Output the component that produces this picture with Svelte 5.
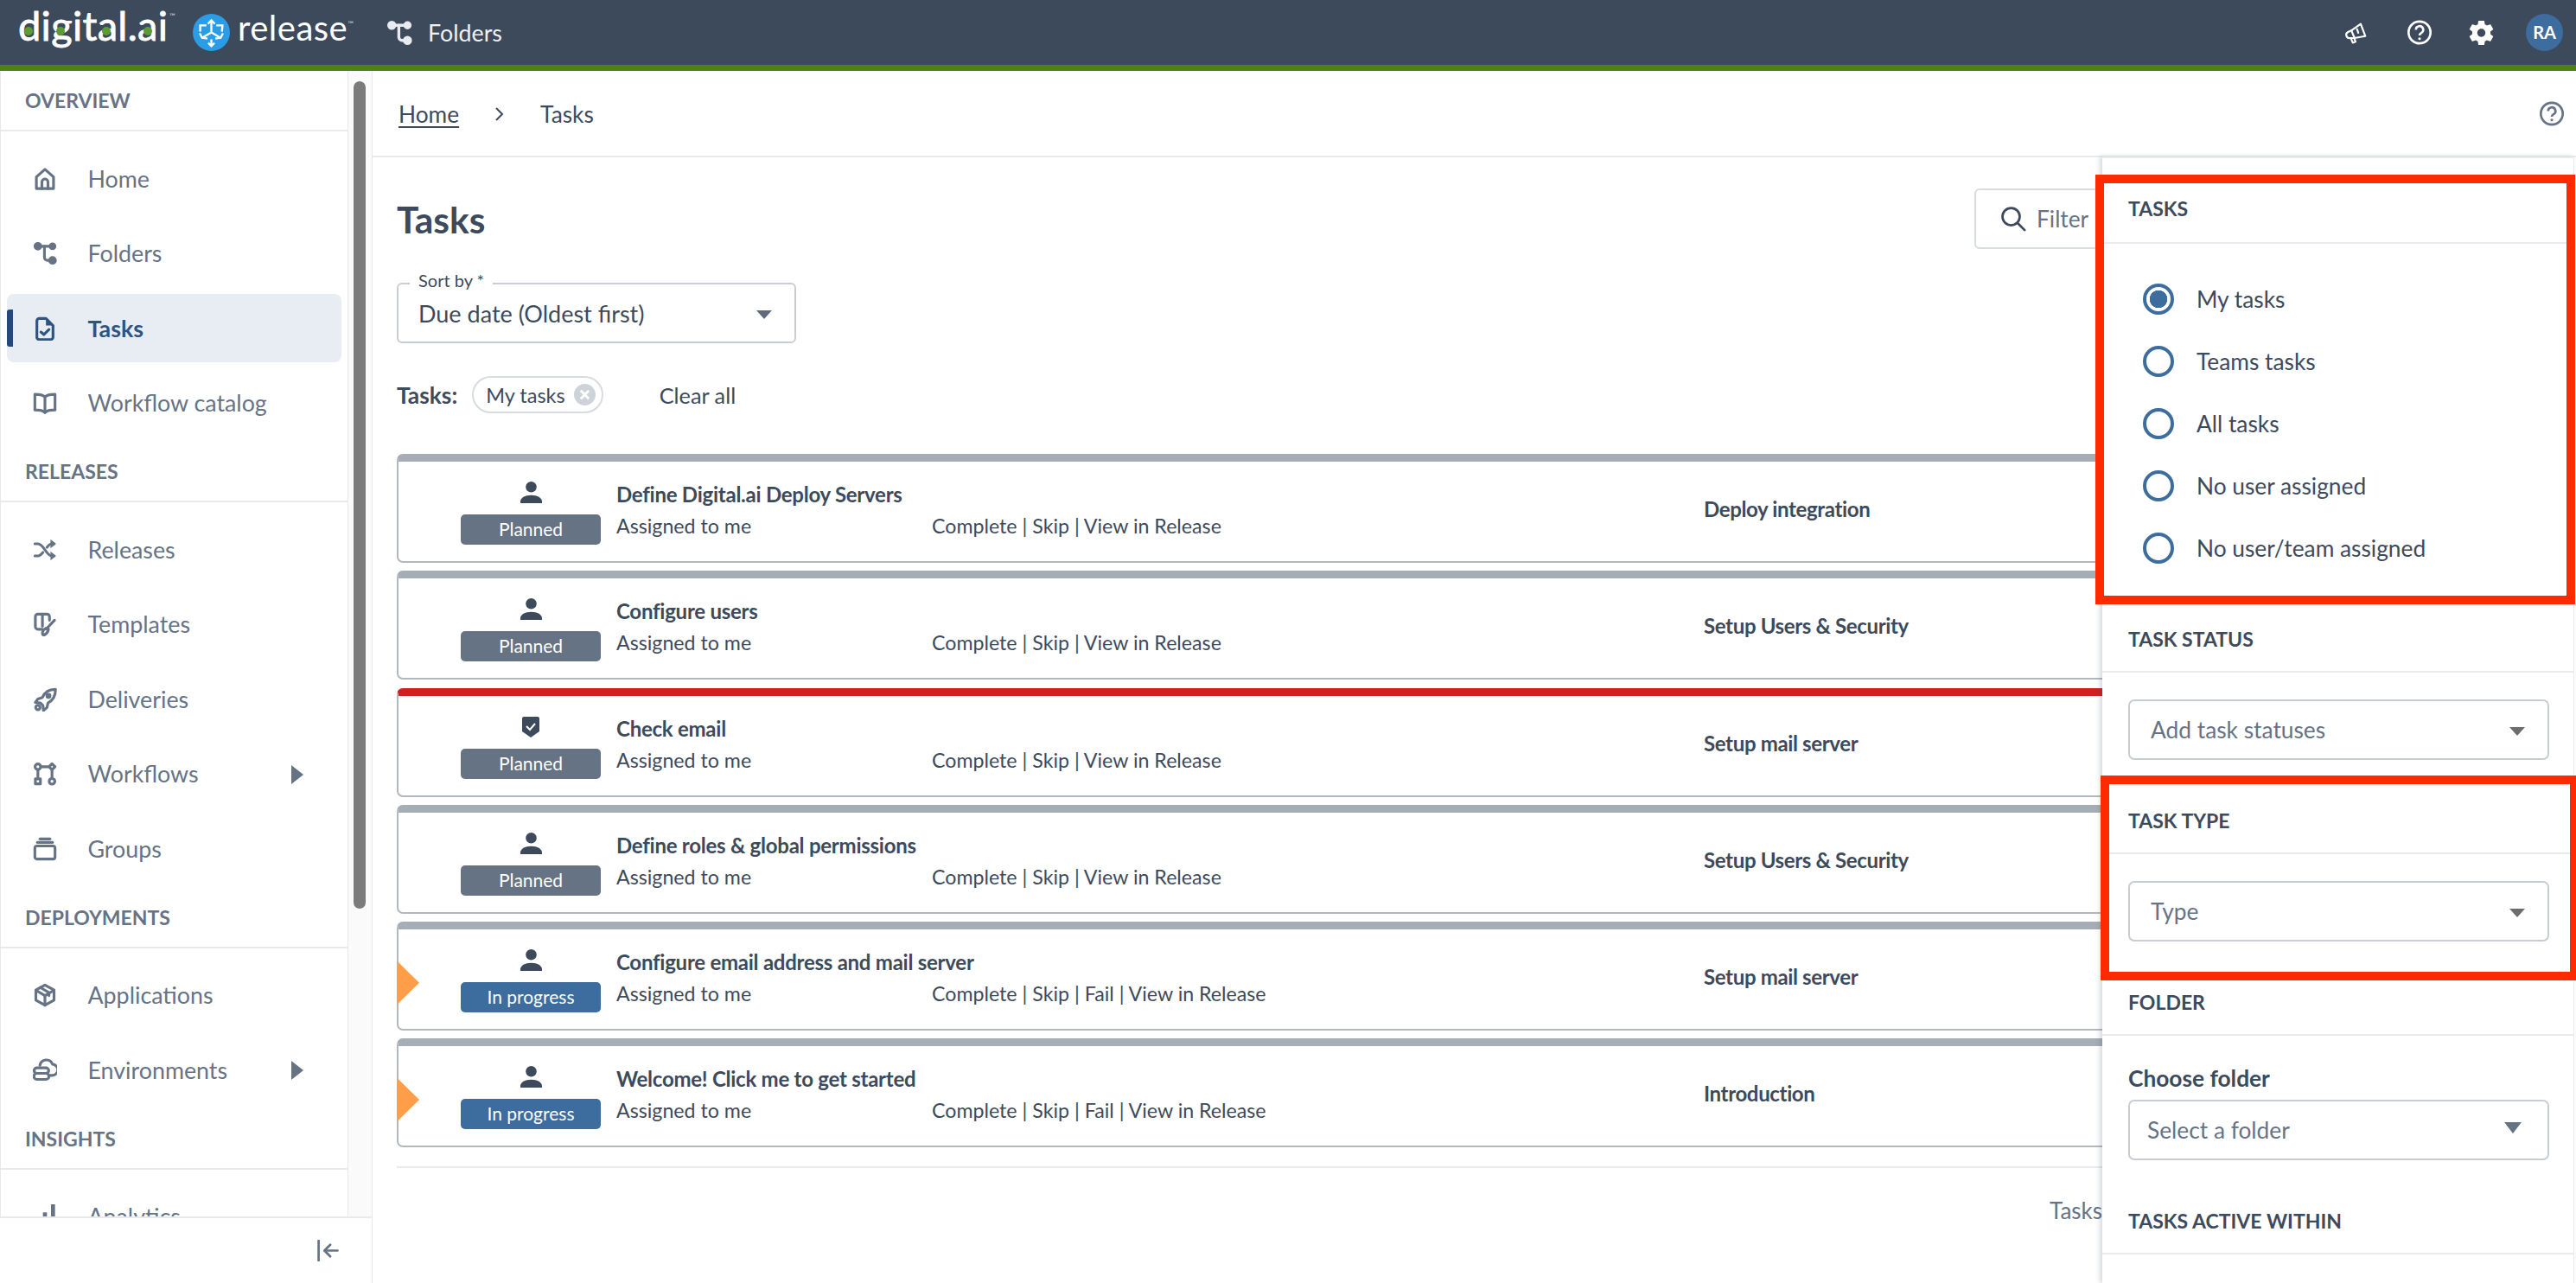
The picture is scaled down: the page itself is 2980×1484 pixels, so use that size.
<script>
const c = (x, y, r) => `M${x - r} ${y}a${r} ${r} 0 1 0 ${2 * r} 0a${r} ${r} 0 1 0 ${-2 * r} 0z`

const icons = {
  home: { s: ["M3.5 21.5V10L12 2.5l8.5 7.5v11.5z", "M9 21.5V15a3 3 0 0 1 6 0v6.5"] },
  folders: { s: ["M5 5h14", "M11.5 5v11a3 3 0 0 0 3 3H19"], f: [c(5, 5, 4.2), c(19.5, 5, 3.8), c(19.5, 19, 4.2)] },
  tasks: { s: ["M4 4.5a2.5 2.5 0 0 1 2.5-2.5H13l7 7v11.5a2.5 2.5 0 0 1-2.5 2.5h-11A2.5 2.5 0 0 1 4 20z", "M8 15.5l3 2.5 5-5"], f: ["M13 2l7 7h-7z"] },
  book: { s: ["M12 6C10 4 6 3.5 2 3.5V19c4 0 8 .5 10 2.5 2-2 6-2.5 10-2.5V3.5C18 3.5 14 4 12 6z", "M12 6v15.5"] },
  releases: { s: ["M2 6h3c3 0 5 3 7 6s4 6 7 6h2", "M2 18h3c2 0 3.500-1.500 5-3.500", "M14 9.500C15.500 7.500 17 6 19 6h2"], f: ["M17.500 1.500L23 6l-5.500 4.500z", "M17.500 13.500L23 18l-5.500 4.500z"] },
  templates: { s: ["M9.500 17H5a2.500 2.500 0 0 1-2.500-2.500v-10A2.500 2.500 0 0 1 5 2h9a2.500 2.500 0 0 1 2.500 2.500V8", "M9.500 2v12", "M21.500 8L13.500 16.500", "M13 16c-2 1-3.500 3.500-3.500 5.500 0 1 1 1.500 2 1 2-1 3.500-3 4-5.500z"] },
  deliveries: { s: ["M22 2c-5 0-10 2.500-12.500 8L5 11.500 2.500 15l5 .5 2.500 2.500.5 5 3.500-3 1-4.500c5-2.500 7.500-8 7.500-13.500z", c(5, 20, 2.200), c(15.500, 8.500, 1.500)] },
  workflows: { s: ["M8 5h7", "M5 9v6", "M19 9v6", c(5, 5, 2.800), "M19 2l3 3-3 3-3-3z", "M2.500 17h5v5h-5z", c(19, 19.500, 2.800)] },
  groups: { s: ["M2 11a2 2 0 0 1 2-2h16a2 2 0 0 1 2 2v9a2 2 0 0 1-2 2H4a2 2 0 0 1-2-2z", "M4.500 5.500h15", "M7 2h10"] },
  applications: { s: ["M12 2l9 5v10l-9 5-9-5V7z", "M3.500 7.500L12 12.500l8.500-5", "M12 12.500V22", "M7.500 4.500L16 9.500v3"] },
  environments: { s: ["M7 7a6.500 6.500 0 0 1 12.500-1A5.500 5.500 0 0 1 19 17h-2", "M4 9.500h9a2 2 0 0 1 0 5.500H4a2 2 0 0 1 0-5.500z", "M4 15h9a2 2 0 0 1 0 6H4a2 2 0 0 1 0-6z"] },
  analytics: { f: ["M18 0h4v24h-4z", "M2 14h4v10H2z", "M10 8h4v16h-4z"] }
}

const nav_groups = [
  { title: "OVERVIEW", items: [
    { label: "Home", icon: "home" },
    { label: "Folders", icon: "folders" },
    { label: "Tasks", icon: "tasks", active: true },
    { label: "Workflow catalog", icon: "book" }
  ]},
  { title: "RELEASES", items: [
    { label: "Releases", icon: "releases" },
    { label: "Templates", icon: "templates" },
    { label: "Deliveries", icon: "deliveries" },
    { label: "Workflows", icon: "workflows", more: true },
    { label: "Groups", icon: "groups" }
  ]},
  { title: "DEPLOYMENTS", items: [
    { label: "Applications", icon: "applications" },
    { label: "Environments", icon: "environments", more: true }
  ]},
  { title: "INSIGHTS", items: [
    { label: "Analytics", icon: "analytics" }
  ]}
]

const plain = "Complete | Skip | View in Release"
const with_fail = "Complete | Skip | Fail | View in Release"

const tasks = [
  { title: "Define Digital.ai Deploy Servers", project: "Deploy integration", status: "Planned", actions: plain },
  { title: "Configure users", project: "Setup Users & Security", status: "Planned", actions: plain },
  { title: "Check email", project: "Setup mail server", status: "Planned", actions: plain, gate: true },
  { title: "Define roles & global permissions", project: "Setup Users & Security", status: "Planned", actions: plain },
  { title: "Configure email address and mail server", project: "Setup mail server", status: "In progress", actions: with_fail, running: true },
  { title: "Welcome! Click me to get started", project: "Introduction", status: "In progress", actions: with_fail, running: true }
]

const assignment = ["My tasks", "Teams tasks", "All tasks", "No user assigned", "No user/team assigned"]
let picked = $state("My tasks")
</script>

<div class="page">
  <header class="topbar">
    <div class="logo">
      <span class="logo_word">digital.ai</span>
      <span class="dot dot_d"></span>
      <span class="dot dot_g"></span>
      <span class="dot dot_a"></span>
      <span class="dot dot_ai"></span>
      <span class="tm tm_digital">™</span>
    </div>
    <svg class="release_icon" viewBox="0 0 24 24">
      <circle cx="12" cy="12" r="12" fill="#2a9de6" />
      <g fill="none" stroke="#fff" stroke-width="1.300">
        <path d="M12 12V4.500M9.800 6.500L12 4.200l2.200 2.300" />
        <path d="M12 12l-6 3.500M12 12l6 3.500" />
        <path d="M12 16.500v4M10 18.800l2 2 2-2" />
        <path d="M4.800 11.500V7.500h4M18.800 11.500l.4-4h-4" />
        <path d="M4.500 12.500l1.500 3 3.500.5M19.500 12.500l-1.500 3-3.500.5" />
      </g>
    </svg>
    <span class="release_word">release</span>
    <span class="tm tm_release">™</span>
    <div class="crumb">
      <svg class="crumb_icon" viewBox="0 0 24 24">
        {@render glyph(icons.folders)}
      </svg>
      <span>Folders</span>
    </div>
    <div class="top_tools">
      <svg class="tool megaphone" viewBox="0 0 24 24" fill="none" stroke="#fff" stroke-width="2" stroke-linejoin="round" stroke-linecap="round">
        <path d="M7 9.500L17 2.500l5 13-11.500 2z" />
        <path d="M7 9.500L3.500 11a3.500 3.500 0 0 0 2.500 6.500l4.500 0" />
        <path d="M6.500 17.500l2 5 3-1-1.500-4" />
        <path d="M13 8l1.500 4" />
      </svg>
      <svg class="tool help" viewBox="0 0 24 24" fill="none" stroke="#fff" stroke-width="2.200">
        <circle cx="12" cy="12" r="10.500" />
        <path d="M8.500 9.500a3.500 3.500 0 1 1 5.200 3c-1.200.7-1.700 1.200-1.700 2.300" />
        <circle cx="12" cy="18" r="1.300" fill="#fff" stroke="none" />
      </svg>
      <svg class="tool gear" viewBox="2.300 1.800 19.400 20.400" fill="#fff">
        <path d="M19.140 12.940c.04-.3.06-.61.06-.94 0-.32-.02-.64-.07-.94l2.030-1.580c.18-.14.23-.41.12-.61l-1.920-3.320c-.12-.22-.37-.29-.59-.22l-2.390.96c-.5-.38-1.030-.7-1.620-.94l-.36-2.540c-.04-.24-.24-.41-.48-.41h-3.840c-.24 0-.43.17-.47.41l-.36 2.540c-.59.24-1.130.57-1.620.94l-2.390-.96c-.22-.08-.47 0-.59.22L2.740 8.870c-.12.21-.08.47.12.61l2.030 1.580c-.05.3-.09.63-.09.94s.02.64.07.94l-2.030 1.580c-.18.14-.23.41-.12.61l1.920 3.320c.12.22.37.29.59.22l2.390-.96c.5.38 1.030.7 1.620.94l.36 2.540c.05.24.24.41.48.41h3.840c.24 0 .44-.17.47-.41l.36-2.540c.59-.24 1.130-.56 1.620-.94l2.390.96c.22.08.47 0 .59-.22l1.920-3.320c.12-.22.07-.47-.12-.61l-2.010-1.580zM12 15.200c-1.760 0-3.200-1.440-3.200-3.200s1.440-3.200 3.200-3.200 3.200 1.440 3.200 3.200-1.440 3.200-3.200 3.200z" />
      </svg>
      <div class="avatar">RA</div>
    </div>
  </header>

  <div class="body">
    <aside class="sidebar">
      <div class="side_scroll">
        <nav class="side_nav">
          {#each nav_groups as group}
            <div class="group_title">{group.title}</div>
            <div class="group_items">
              {#each group.items as item}
                <div class="nav_row" class:active={item.active}>
                  <svg class="nav_icon" viewBox="0 0 24 24">
                    {@render glyph(icons[item.icon])}
                  </svg>
                  <span>{item.label}</span>
                  {#if item.more}<span class="more"></span>{/if}
                </div>
              {/each}
            </div>
          {/each}
        </nav>
        <div class="gutter"><div class="thumb"></div></div>
      </div>
      <div class="side_foot">
        <svg class="collapse" viewBox="0 0 24 24" fill="none" stroke="currentColor" stroke-width="2.600" stroke-linecap="round" stroke-linejoin="round">
          <path d="M2 1v22" />
          <path d="M23 12H9" />
          <path d="M15 5.500L8.500 12l6.500 6.500" />
        </svg>
      </div>
    </aside>

    <main class="main">
      <div class="breadcrumb">
        <span class="bc_home">Home</span>
        <svg class="bc_sep" viewBox="0 0 12 20" fill="none" stroke="#3d4a5c" stroke-width="2"><path d="M2 3l7 7-7 7" /></svg>
        <span>Tasks</span>
        <svg class="bc_help" viewBox="0 0 24 24" fill="none" stroke="#667385" stroke-width="2.200">
          <circle cx="12" cy="12" r="10.500" />
          <path d="M8.500 9.500a3.500 3.500 0 1 1 5.200 3c-1.200.7-1.700 1.200-1.700 2.300" />
          <circle cx="12" cy="18" r="1.300" fill="#667385" stroke="none" />
        </svg>
      </div>

      <div class="content">
        <div class="title_row">
          <h1>Tasks</h1>
          <div class="filter_btn">
            <svg class="search" viewBox="0 0 24 24" fill="none" stroke="#3d4a5c" stroke-width="2.200" stroke-linecap="round">
              <circle cx="10" cy="10" r="8" />
              <path d="M16 16l6.500 6.500" />
            </svg>
            <span>Filter</span>
          </div>
        </div>

        <div class="sort_box">
          <span class="sort_label">Sort by *</span>
          <span>Due date (Oldest first)</span>
          <span class="caret"></span>
        </div>

        <div class="applied">
          <b>Tasks:</b>
          <span class="chip">
            My tasks
            <svg class="chip_x" viewBox="0 0 24 24">
              <circle cx="12" cy="12" r="12" fill="#ced3da" />
              <path d="M7.500 7.500l9 9M16.500 7.500l-9 9" stroke="#fff" stroke-width="2.800" />
            </svg>
          </span>
          <span class="clear_all">Clear all</span>
        </div>

        <div class="task_list">
          {#each tasks as task}
            <div class="task_card" class:red_bar={task.gate}>
              {#if task.running}<span class="running"></span>{/if}
              <div class="task_state">
                {#if task.gate}
                  <svg class="shield" viewBox="0 0 22 26">
                    <path d="M1 3a2 2 0 0 1 2-2h16a2 2 0 0 1 2 2v15l-10 7-10-7z" fill="#3d4a5c" />
                    <path d="M6 12l4 4 6-7" fill="none" stroke="#fff" stroke-width="2" />
                  </svg>
                {:else}
                  <svg class="person" viewBox="0 0 24 24" fill="#3d4a5c">
                    <circle cx="12" cy="6" r="6" />
                    <path d="M0 24v-2c0-4 5-7 12-7s12 3 12 7v2z" />
                  </svg>
                {/if}
                <span class="badge" class:in_progress={task.running}>{task.status}</span>
              </div>
              <div class="task_text">
                <div class="task_title">{task.title}</div>
                <div>Assigned to me</div>
              </div>
              <div class="task_actions">{task.actions}</div>
              <div class="task_project">{task.project}</div>
            </div>
          {/each}
        </div>

        <div class="list_end"></div>
        <div class="pager">Tasks</div>
      </div>

      <aside class="filter_panel">
        <section class="marked wide">
          <h2>TASKS</h2>
          <div class="radios">
            {#each assignment as option}
              <label class="radio_row">
                <input type="radio" name="assignment" value={option} bind:group={picked} />
                <span>{option}</span>
              </label>
            {/each}
          </div>
        </section>

        <section>
          <h2 class="snug">TASK STATUS</h2>
          <div class="pad">
            <div class="select"><span>Add task statuses</span><span class="caret small"></span></div>
          </div>
        </section>

        <section class="marked">
          <h2 class="snug">TASK TYPE</h2>
          <div class="pad">
            <div class="select"><span>Type</span><span class="caret small"></span></div>
          </div>
        </section>

        <section>
          <h2 class="snug">FOLDER</h2>
          <div class="pad">
            <div class="choose">Choose folder</div>
            <div class="select folder"><span>Select a folder</span><span class="caret big"></span></div>
          </div>
        </section>

        <section>
          <h2 class="snug">TASKS ACTIVE WITHIN</h2>
        </section>
      </aside>
    </main>
  </div>
</div>

{#snippet glyph(icon)}
  {#each icon.s ?? [] as d}
    <path {d} fill="none" stroke="currentColor" stroke-width="2.700" stroke-linejoin="round" stroke-linecap="round" />
  {/each}
  {#each icon.f ?? [] as d}
    <path {d} fill="currentColor" />
  {/each}
{/snippet}

<style>
:global(body) {
  margin: 0;
  background: #fff;
}

.page {
  width: 2980px;
  height: 1484px;
  overflow: hidden;
  display: flex;
  flex-direction: column;
  font-family: Lato, "Noto Sans", sans-serif;
  font-size: 26.3px;
  color: #3d4a5c;
}

/* top bar */

.topbar {
  flex: 0 0 75px;
  box-sizing: content-box;
  border-bottom: 7px solid #4f8212;
  background: #3d4a5c;
  color: #fff;
  display: flex;
  align-items: center;
}

.logo {
  position: relative;
  margin-left: 21px;
  width: 202px;
  height: 75px;
}

.logo_word {
  font-size: 47px;
  line-height: 58px;
  letter-spacing: 0.3px;
  color: #fff;
  -webkit-text-stroke: 0.8px #fff;
}

.dot {
  position: absolute;
  top: 31px;
  width: 10px;
  height: 10px;
  border-radius: 50%;
  background: #5d9c32;
}

.dot_d { left: 7px; }
.dot_g { left: 44px; }
.dot_a { left: 97px; }
.dot_ai { left: 145px; }

.tm {
  font-size: 9px;
  color: #d5d9de;
}

.tm_digital {
  position: absolute;
  left: 175px;
  top: 13px;
}

.release_icon {
  width: 43px;
  height: 43px;
}

.release_word {
  margin-left: 9px;
  margin-top: -11px;
  font-size: 40px;
  letter-spacing: 0.5px;
  line-height: 75px;
}

.tm_release {
  align-self: flex-start;
  margin-top: 22px;
}

.crumb {
  margin-left: 38px;
  display: flex;
  align-items: center;
  gap: 18px;
  font-size: 26.8px;
  color: #eef0f3;
}

.crumb_icon {
  width: 30px;
  height: 30px;
  color: #e8ebef;
}

.top_tools {
  margin-left: auto;
  margin-right: 15px;
  display: flex;
  align-items: center;
}

.tool {
  display: block;
}

.megaphone {
  width: 29px;
  height: 26px;
}

.help {
  width: 30px;
  height: 29px;
  margin-left: 44px;
}

.gear {
  width: 29px;
  height: 30px;
  margin-left: 42px;
}

.avatar {
  margin-left: 37px;
  width: 43px;
  height: 43px;
  border-radius: 50%;
  background: #3d6c9e;
  font-size: 20px;
  font-weight: 700;
  line-height: 43px;
  text-align: center;
}

.body {
  flex: 1;
  min-height: 0;
  display: flex;
}

/* side navigation */

.sidebar {
  flex: 0 0 431px;
  display: flex;
  flex-direction: column;
  border-right: 1px solid #e6e8eb;
  box-sizing: border-box;
}

.side_scroll {
  flex: 1;
  min-height: 0;
  display: flex;
}

.side_nav {
  flex: 0 0 403px;
  box-sizing: border-box;
  border-left: 1px solid #e6e8eb;
  border-right: 1px solid #e6e8eb;
  overflow: hidden;
}

.group_title {
  height: 70px;
  box-sizing: border-box;
  border-bottom: 2px solid #e8eaed;
  padding-left: 28px;
  line-height: 68px;
  font-size: 23px;
  font-weight: 700;
  color: #667385;
}

.group_items {
  padding: 15px 0 5.5px;
  display: flex;
  flex-direction: column;
  gap: 7.5px;
}

.nav_row {
  position: relative;
  flex: 0 0 79px;
  margin: 0 7px;
  padding-left: 30px;
  box-sizing: border-box;
  display: flex;
  align-items: center;
  gap: 35.5px;
  font-size: 26.8px;
  color: #667385;
  border-radius: 8px;
}

.nav_row.active {
  background: #e8edf4;
  color: #2f5483;
  font-weight: 700;
}

.nav_row.active::before {
  content: "";
  position: absolute;
  left: 0;
  top: 18px;
  width: 7px;
  height: 43px;
  border-radius: 3px 0 0 3px;
  background: #24497a;
}

.nav_icon {
  width: 28px;
  height: 28px;
  flex: none;
}

.more {
  position: absolute;
  left: 329px;
  top: 29px;
  border-left: 14px solid #667385;
  border-top: 11px solid transparent;
  border-bottom: 11px solid transparent;
}

.gutter {
  flex: 1;
  background: #fafafa;
  padding: 12px 7px 0 6px;
}

.thumb {
  height: 957px;
  border-radius: 7px;
  background: #7b7b7b;
}

.side_foot {
  flex: 0 0 77px;
  box-sizing: border-box;
  border-top: 2px solid #e8eaed;
  padding-right: 38px;
  display: flex;
  align-items: center;
  justify-content: flex-end;
  color: #667385;
}

.collapse {
  width: 26px;
  height: 25px;
}

/* main area */

.main {
  position: relative;
  flex: 1;
  min-width: 0;
  display: flex;
  flex-direction: column;
}

.breadcrumb {
  flex: 0 0 100px;
  box-sizing: border-box;
  border-bottom: 2px solid #e8eaed;
  padding: 1px 13px 0 30px;
  display: flex;
  align-items: center;
}

.bc_home {
  text-decoration: underline;
  text-underline-offset: 4px;
}

.bc_sep {
  width: 12px;
  height: 20px;
  margin: 0 41px 0 41px;
}

.bc_help {
  margin-left: auto;
  width: 30px;
  height: 29px;
}

.content {
  padding: 36px 29px 0 28px;
}

.title_row {
  display: flex;
  align-items: center;
  height: 70px;
}

h1 {
  margin: 0;
  font-size: 42.5px;
  font-weight: 700;
}

.filter_btn {
  margin-left: auto;
  margin-right: 367px;
  width: 300px;
  height: 70px;
  box-sizing: border-box;
  border: 2px solid #d8dbe0;
  border-radius: 6px;
  display: flex;
  align-items: center;
  padding-left: 28px;
  gap: 12px;
  color: #667385;
}

.search {
  width: 30px;
  height: 30px;
}

.sort_box {
  position: relative;
  margin-top: 39px;
  width: 462px;
  height: 70px;
  box-sizing: border-box;
  border: 2px solid #c9cdd3;
  border-radius: 6px;
  padding-left: 23px;
  display: flex;
  align-items: center;
  font-size: 27px;
}

.sort_label {
  position: absolute;
  left: 13px;
  top: -19px;
  background: #fff;
  padding: 0 10px;
  font-size: 20px;
  line-height: 28px;
}

.caret {
  position: absolute;
  right: 26px;
  top: 30px;
  border-top: 10px solid #5f6b7a;
  border-left: 9px solid transparent;
  border-right: 9px solid transparent;
}

.applied {
  margin-top: 38px;
  height: 43px;
  display: flex;
  align-items: center;
}

.applied b {
  font-weight: 700;
}

.chip {
  margin-left: 17px;
  height: 43px;
  box-sizing: border-box;
  border: 2px solid #d8dbe0;
  border-radius: 22px;
  padding: 0 7px 0 14px;
  display: flex;
  align-items: center;
  gap: 10px;
  font-size: 23.5px;
}

.chip_x {
  width: 25px;
  height: 25px;
}

.clear_all {
  margin-left: 65px;
  font-size: 25.3px;
}

.task_list {
  margin-top: 47px;
  display: flex;
  flex-direction: column;
  gap: 9.3px;
}

.task_card {
  position: relative;
  height: 126px;
  box-sizing: border-box;
  border: 2px solid #b3b8bf;
  border-top: 9px solid #a5adb7;
  border-radius: 7px;
  display: grid;
  grid-template-columns: 252px 365px 893px 1fr;
  font-size: 23.2px;
}

.task_card.red_bar {
  border-top-color: #d11f1f;
}

.running {
  position: absolute;
  left: -2px;
  top: 36px;
  width: 26px;
  height: 51px;
  background: #ff9e49;
  clip-path: polygon(0 0, 100% 50%, 0 100%);
}

.task_state {
  padding: 23px 0 0 72px;
  width: 162px;
  display: flex;
  flex-direction: column;
  align-items: center;
}

.person {
  width: 25px;
  height: 25px;
  margin-bottom: 13px;
}

.shield {
  width: 22px;
  height: 26px;
  margin-bottom: 12px;
}

.badge {
  width: 162px;
  height: 35px;
  border-radius: 5px;
  background: #667385;
  color: #fff;
  font-size: 21px;
  line-height: 34px;
  text-align: center;
}

.badge.in_progress {
  background: #3d6c9e;
}

.task_text {
  padding-top: 24px;
  display: flex;
  flex-direction: column;
  gap: 10px;
  line-height: 27px;
}

.task_title {
  font-size: 24px;
  font-weight: 700;
  letter-spacing: -0.25px;
  white-space: nowrap;
}

.task_actions {
  padding-top: 61px;
  line-height: 27px;
}

.task_project {
  align-self: center;
  font-size: 24px;
  font-weight: 700;
  margin-top: -6px;
  letter-spacing: -0.35px;
}

.list_end {
  margin-top: 22px;
  border-top: 2px solid #e8eaed;
}

.pager {
  margin: 33px 0 0 1912px;
  font-size: 26px;
  color: #667385;
}

/* filter drawer */

.filter_panel {
  position: absolute;
  top: 99px;
  left: 2001px;
  right: 2px;
  bottom: 0;
  box-sizing: border-box;
  padding-top: 20px;
  background: #fff;
  border-top: 2px solid #e8eaed;
  border-right: 1px solid #e8eaed;
  box-shadow: -3px 0 5px rgba(60, 70, 85, 0.2);
}

section {
  position: relative;
}

.marked::after {
  content: "";
  position: absolute;
  top: -14px;
  left: -2px;
  right: -6px;
  bottom: -13px;
  border: 10px solid #ff2a00;
  pointer-events: none;
}

.marked.wide::after {
  left: -8px;
  right: -2px;
  top: -1px;
  bottom: 2px;
}

h2 {
  margin: 0;
  height: 79px;
  box-sizing: border-box;
  border-bottom: 2px solid #e8eaed;
  padding-left: 30px;
  font-size: 23px;
  font-weight: 700;
  line-height: 77px;
}

h2.snug {
  height: 77px;
  line-height: 76px;
}

.radios {
  padding: 46px 0 49px 47px;
  display: flex;
  flex-direction: column;
  gap: 36px;
}

.radio_row {
  height: 36px;
  display: flex;
  align-items: center;
  gap: 26px;
}

input[type="radio"] {
  appearance: none;
  margin: 0;
  width: 36px;
  height: 36px;
  box-sizing: border-box;
  border: 4px solid #3d6c9e;
  border-radius: 50%;
  background: #fff;
}

input[type="radio"]:checked {
  background: radial-gradient(circle, #3d6c9e 0 10px, #fff 10.5px);
}

.pad {
  padding: 31px 28px 32px 30px;
}

.select {
  position: relative;
  height: 70px;
  box-sizing: border-box;
  border: 2px solid #c9cdd3;
  border-radius: 7px;
  padding-left: 24px;
  display: flex;
  align-items: center;
  color: #667385;
}

.select.folder {
  padding-left: 20px;
  margin-top: 10px;
}

.caret.small {
  top: 30px;
  right: 26px;
  border-top-color: #6d6d6d;
}

.caret.big {
  top: 24px;
  right: 30px;
  border-top: 13px solid #667385;
  border-left-width: 10px;
  border-right-width: 10px;
}

.choose {
  font-weight: 700;
  line-height: 30px;
  margin-top: 3px;
}
</style>
